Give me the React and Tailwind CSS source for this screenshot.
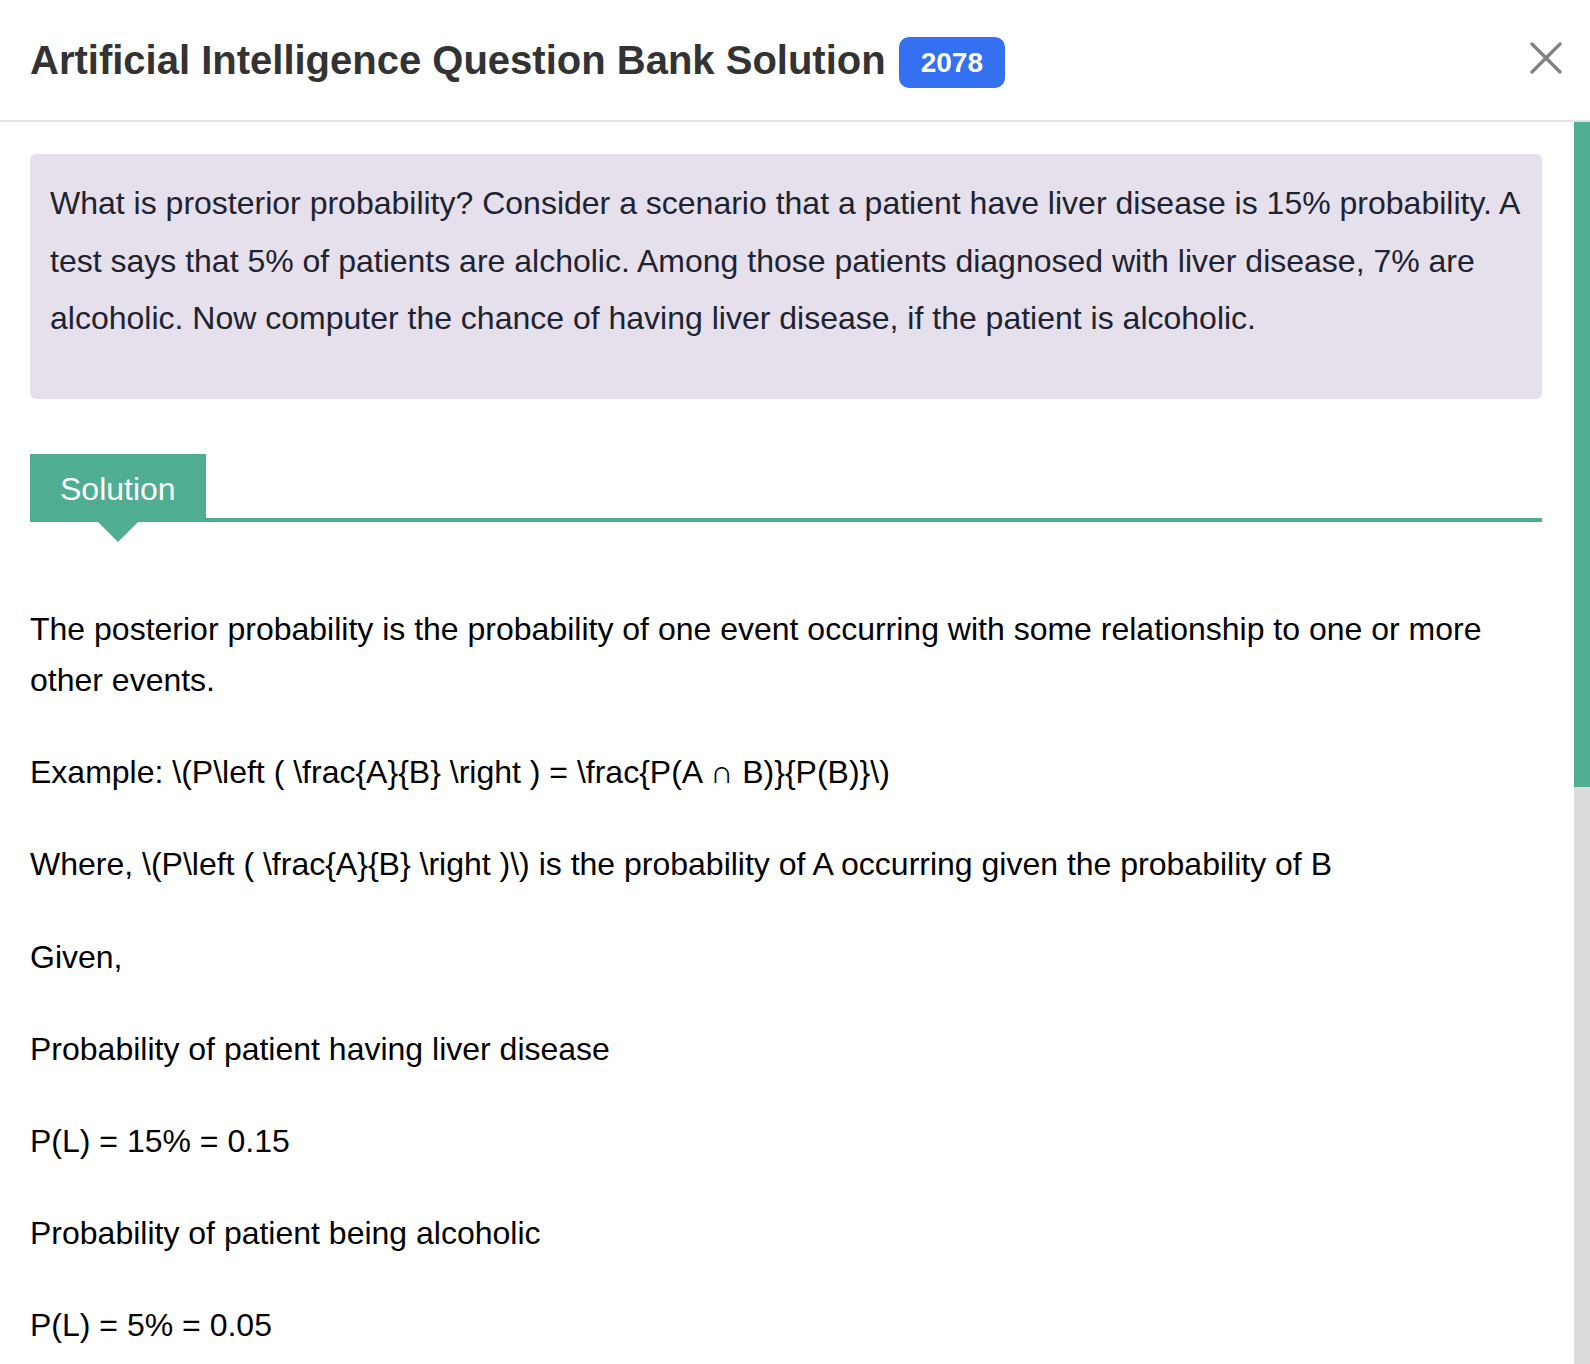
import React from 'react';

const questionLines = [
  'What is prosterior probability? Consider a scenario that a patient have liver disease is 15% probability. A',
  'test says that 5% of patients are alcholic. Among those patients diagnosed with liver disease, 7% are',
  'alcoholic. Now computer the chance of having liver disease, if the patient is alcoholic.',
];

const answer = [
  'The posterior probability is the probability of one event occurring with some relationship to one or more other events.',
  'Example: \\(P\\left ( \\frac{A}{B} \\right ) = \\frac{P(A \u2229 B)}{P(B)}\\)',
  'Where, \\(P\\left ( \\frac{A}{B} \\right )\\) is the probability of A occurring given the probability of B',
  'Given,',
  'Probability of patient having liver disease',
  'P(L) = 15% = 0.15',
  'Probability of patient being alcoholic',
  'P(L) = 5% = 0.05',
];

const App = () => {
  return (
    <div
      className="w-full h-[1364px] bg-white overflow-hidden flex flex-col"
      style={{ fontFamily: '"Liberation Sans", Arial, sans-serif' }}
    >
      {/* header */}
      <div className="h-[122px] shrink-0 flex items-center justify-between pl-[30px] pr-[28px] border-b-2 border-[#dfe2e6]">
        <div className="flex items-center">
          <h1 className="text-[40px] leading-[40px] font-bold text-[#333333]">
            Artificial Intelligence Question Bank Solution
          </h1>
          <span className="ml-[13px] mt-[5px] h-[51px] px-[22px] flex items-center rounded-[10px] bg-[#3370f2] text-white text-[28px] font-bold">
            2078
          </span>
        </div>
        <button className="mb-[5px] text-[#808080]">
          <svg width="32" height="32" viewBox="0 0 32 32" fill="none" stroke="currentColor" strokeWidth="3.2" strokeLinecap="round">
            <line x1="2" y1="2" x2="30" y2="30" />
            <line x1="30" y1="2" x2="2" y2="30" />
          </svg>
        </button>
      </div>

      <div className="flex flex-1 min-h-0">
        <div className="flex-1 min-w-0 pl-[30px] pr-[32px] pt-[32px] overflow-hidden">
          <div className="rounded-md bg-[#e6dfec] px-5 pt-[21px] pb-[51px] text-[32px] leading-[57.6px] text-[#1d2330]">
            {questionLines.map((line, i) => (
              <span key={i} className="block whitespace-nowrap">
                {line}
              </span>
            ))}
          </div>

          <div className="mt-[55px] flex items-end">
            <div className="relative h-[68px] px-[30px] pt-[2px] flex items-center bg-[#4fad91] text-white text-[32px]">
              Solution
              <span className="absolute left-[68px] top-full w-0 h-0 border-l-[20px] border-r-[20px] border-t-[20px] border-l-transparent border-r-transparent border-t-[#4fad91]" />
            </div>
            <div className="flex-1 h-[4px] bg-[#4fad91]" />
          </div>

          <div className="mt-[82px] text-[32px] leading-[51.2px] text-black">
            {answer.map((p, i) => (
              <p key={i} className="mb-[41px]">
                {p}
              </p>
            ))}
          </div>
        </div>

        {/* scrollbar */}
        <div className="w-[16px] shrink-0 flex flex-col bg-[#dcdcdc]">
          <div className="h-[665px] bg-[#4fad91]" />
        </div>
      </div>
    </div>
  );
};

export default App;
